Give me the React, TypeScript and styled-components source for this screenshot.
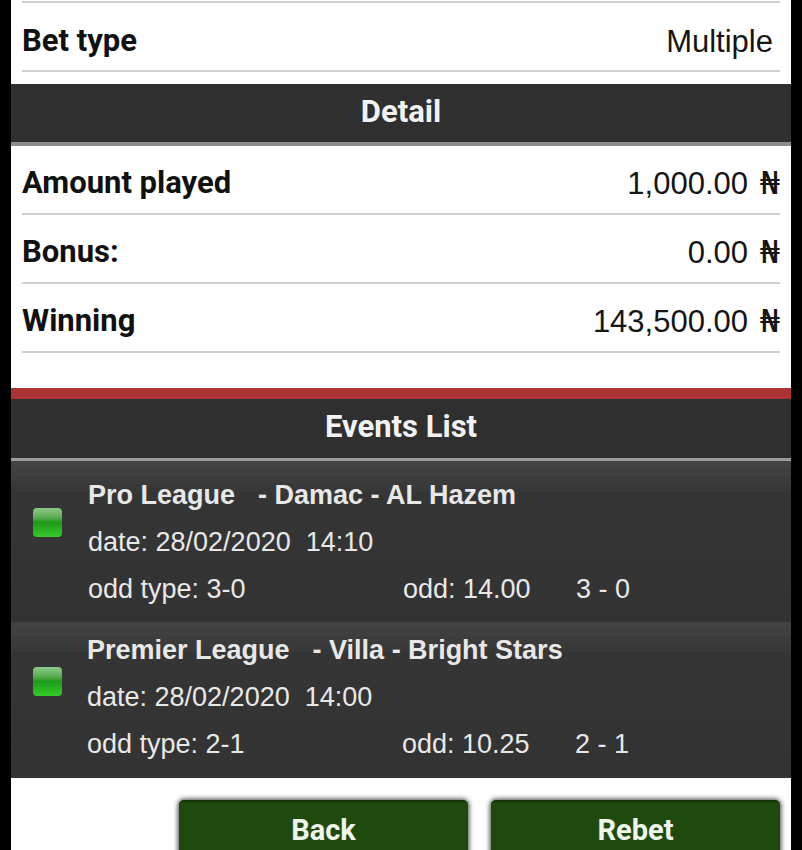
import React from "react";
import styled, { createGlobalStyle } from "styled-components";

const GlobalStyle = createGlobalStyle`
  html, body {
    margin: 0;
    padding: 0;
    background: #000;
  }
`;

const Page = styled.div`
  width: 802px;
  height: 850px;
  overflow: hidden;
  box-sizing: border-box;
  padding: 0 11px;
  background: #000;
`;

const Screen = styled.div`
  height: 850px;
  overflow: hidden;
  background: #fff;
  padding-top: 1px;
  box-sizing: border-box;
`;

const InfoList = styled.div<{ $top?: boolean }>`
  margin: 0 11px;
  border-top: ${(p) => (p.$top ? "2px solid #cfcfcf" : "0")};
`;

const InfoRow = styled.div<{ $padTop?: number }>`
  display: flex;
  align-items: center;
  justify-content: space-between;
  height: 69px;
  padding-top: ${(p) => p.$padTop ?? 6}px;
  box-sizing: border-box;
  border-bottom: 2px solid #cfcfcf;
`;

const Label = styled.span`
  font-family: Roboto, sans-serif;
  font-weight: 700;
  font-size: 31px;
  color: #111;
`;

const Value = styled.span<{ $inset?: number; $drop?: number }>`
  font-family: "Liberation Sans", Arial, sans-serif;
  font-size: 31px;
  color: #151515;
  padding-top: ${(p) => p.$drop ?? 0}px;
  margin-right: ${(p) => p.$inset ?? 0}px;
`;

const Naira = styled.span`
  font-family: "DejaVu Sans", sans-serif;
  font-size: 32px;
  margin-left: 3px;
`;

const SectionBar = styled.div<{ $rule: string; $ruleHeight: number; $height: number }>`
  display: flex;
  align-items: center;
  justify-content: center;
  height: ${(p) => p.$height}px;
  padding-bottom: 4px;
  box-sizing: content-box;
  background: #2f2f2f;
  border-bottom: ${(p) => p.$ruleHeight}px solid ${(p) => p.$rule};
  font-family: Roboto, sans-serif;
  font-weight: 700;
  font-size: 31px;
  color: #f2f2f2;
`;

const DetailBar = styled(SectionBar)`
  margin-top: 12px;
`;

const RedBand = styled.div`
  height: 11px;
  margin-top: 35px;
  background: #ad3234;
`;

const EventRow = styled.div<{ $height: number; $padTop: number }>`
  display: flex;
  height: ${(p) => p.$height}px;
  padding-top: ${(p) => p.$padTop}px;
  box-sizing: border-box;
  background: linear-gradient(#444 0, #353535 34px, #333 100%);
`;

const LedColumn = styled.div<{ $top: number; $width: number }>`
  flex: 0 0 ${(p) => p.$width}px;
  padding: ${(p) => p.$top}px 0 0 22px;
  box-sizing: border-box;
`;

const Led = styled.div`
  width: 29px;
  height: 29px;
  border-radius: 4px;
  background: linear-gradient(#8fc98a 0, #5fae58 30%, #1f9a18 50%, #35cb2a 100%);
`;

const EventBody = styled.div`
  flex: 1;
  font-family: "Liberation Sans", Arial, sans-serif;
  font-size: 27px;
  color: #e8e8e8;
`;

const EventLine = styled.div`
  display: flex;
  align-items: center;
  height: 47px;
  white-space: pre;
`;

const EventTitle = styled(EventLine)`
  font-weight: 700;
`;

const League = styled.span`
  margin-right: 23px;
`;

const OddType = styled.span`
  flex: 0 0 315px;
`;

const Odd = styled.span`
  flex: 0 0 173px;
`;

const Actions = styled.div`
  display: flex;
  justify-content: flex-end;
  gap: 23px;
  margin: 22px 11px 0 0;
`;

const ActionButton = styled.button`
  width: 289px;
  height: 62px;
  padding: 0 0 4px;
  border: 0;
  border-radius: 5px;
  background: #1f4a0e;
  border-top: 2px solid #16330b;
  box-shadow: 0 0 5px 1px rgba(0, 0, 0, 0.75);
  font-family: Roboto, sans-serif;
  font-weight: 700;
  font-size: 29px;
  color: #f0f5ec;
  text-align: center;
  align-self: flex-start;
`;

type Event = {
  league: string;
  match: string;
  date: string;
  oddType: string;
  odd: string;
  score: string;
  height: number;
  padTop: number;
  ledTop: number;
  ledWidth: number;
};

const events: Event[] = [
  {
    league: "Pro League",
    match: "- Damac - AL Hazem",
    date: "date: 28/02/2020  14:10",
    oddType: "odd type: 3-0",
    odd: "odd: 14.00",
    score: "3 - 0",
    height: 161,
    padTop: 11,
    ledTop: 36,
    ledWidth: 77,
  },
  {
    league: "Premier League",
    match: "- Villa - Bright Stars",
    date: "date: 28/02/2020  14:00",
    oddType: "odd type: 2-1",
    odd: "odd: 10.25",
    score: "2 - 1",
    height: 156,
    padTop: 5,
    ledTop: 40,
    ledWidth: 76,
  },
];

export default function App() {
  return (
    <Page>
      <GlobalStyle />
      <Screen>
        <InfoList $top>
          <InfoRow $padTop={8}>
            <Label>Bet type</Label>
            <Value $inset={7} $drop={2}>Multiple</Value>
          </InfoRow>
        </InfoList>
        <DetailBar $rule="#8c8c8c" $ruleHeight={4} $height={54}>Detail</DetailBar>
        <InfoList>
          <InfoRow>
            <Label>Amount played</Label>
            <Value>
              1,000.00 <Naira>₦</Naira>
            </Value>
          </InfoRow>
          <InfoRow>
            <Label>Bonus:</Label>
            <Value>
              0.00 <Naira>₦</Naira>
            </Value>
          </InfoRow>
          <InfoRow>
            <Label>Winning</Label>
            <Value>
              143,500.00 <Naira>₦</Naira>
            </Value>
          </InfoRow>
        </InfoList>
        <RedBand />
        <SectionBar $rule="#9a9a9a" $ruleHeight={3} $height={55}>Events List</SectionBar>
        {events.map((ev) => (
          <EventRow key={ev.league} $height={ev.height} $padTop={ev.padTop}>
            <LedColumn $top={ev.ledTop} $width={ev.ledWidth}>
              <Led />
            </LedColumn>
            <EventBody>
              <EventTitle>
                <League>{ev.league}</League>
                {ev.match}
              </EventTitle>
              <EventLine>{ev.date}</EventLine>
              <EventLine>
                <OddType>{ev.oddType}</OddType>
                <Odd>{ev.odd}</Odd>
                {ev.score}
              </EventLine>
            </EventBody>
          </EventRow>
        ))}
        <Actions>
          <ActionButton>Back</ActionButton>
          <ActionButton>Rebet</ActionButton>
        </Actions>
      </Screen>
    </Page>
  );
}
